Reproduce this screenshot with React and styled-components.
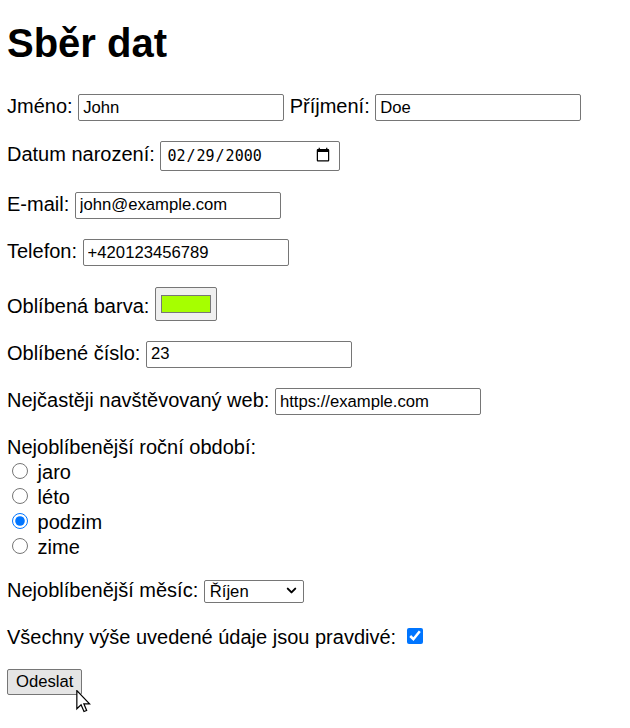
// Imports
import React from 'react';
import styled, { createGlobalStyle } from 'styled-components';
import { ChevronDown } from 'lucide-react';

// Données
const MOIS = ['Leden', 'Únor', 'Březen', 'Duben', 'Květen', 'Červen', 'Červenec', 'Srpen', 'Září', 'Říjen', 'Listopad', 'Prosinec'];
const OBDOBI = ['jaro', 'léto', 'podzim', 'zime'];

// Composant
const App = () => {

	// Return
	return(
		<Page>
			<GlobalStyle/>

			{/* Titre */}
			<Title>Sběr dat</Title>
			{/* Titre */}

			{/* Formulaire */}
			<Form onSubmit={ (e) => { e.preventDefault(); } }>

				<Row>
					Jméno: <TextInput type="text" defaultValue="John" /> Příjmení: <TextInput type="text" defaultValue="Doe" />
				</Row>

				<Row>
					Datum narození: <DateInput type="date" defaultValue="2000-02-29" />
				</Row>

				<Row>
					E-mail: <TextInput type="email" defaultValue="john@example.com" />
				</Row>

				<Row>
					Telefon: <TextInput type="tel" defaultValue="+420123456789" />
				</Row>

				<Row>
					Oblíbená barva: <ColorInput type="color" defaultValue="#a6ff00" />
				</Row>

				<Row>
					Oblíbené číslo: <TextInput type="number" defaultValue="23" />
				</Row>

				<Row>
					Nejčastěji navštěvovaný web: <TextInput type="url" defaultValue="https://example.com" />
				</Row>

				{/* Obdobi */}
				<Row>
					Nejoblíbenější roční období:<br/>
					{
						OBDOBI.map((o) => (
							<React.Fragment key={ o }>
								<Radio type="radio" name="obdobi" value={ o } defaultChecked={ o === 'podzim' } /> { o }<br/>
							</React.Fragment>
						))
					}
				</Row>
				{/* Obdobi */}

				{/* Mois */}
				<Row>
					Nejoblíbenější měsíc: <SelectZone>
						<Select defaultValue="Říjen">
							{ MOIS.map((m) => <option key={ m } value={ m }>{ m }</option>) }
						</Select>
						<SelectArrow size={ 15 } strokeWidth={ 3.2 } />
					</SelectZone>
				</Row>
				{/* Mois */}

				<Row>
					Všechny výše uvedené údaje jsou pravdivé: <Checkbox type="checkbox" defaultChecked />
				</Row>

				{/* Envoi */}
				<Row>
					<SubmitZone>
						<Button type="submit">Odeslat</Button>
						<Cursor width="15" height="23" viewBox="0 0 12 19">
							<path d="M0.5 0.5 L0.5 15.5 L4 12.2 L6.4 17.8 L8.6 16.9 L6.3 11.4 L11 11.4 Z" fill="white" stroke="black" strokeWidth="1" strokeLinejoin="miter" />
						</Cursor>
					</SubmitZone>
				</Row>
				{/* Envoi */}

			</Form>
			{/* Formulaire */}

		</Page>
	);

};

// Styled
const GlobalStyle = createGlobalStyle`
	body{
		margin: 0;
		background: white;
		color: black;
		font-family: "Liberation Sans", Arial, sans-serif;
		font-size: 20px;
	}
`;

const Page = styled.div`
	padding: 0 7px 20px 7px;
`;

const Title = styled.h1`
	margin: 21px 0 28px 0;
	font-size: 40px;
	font-weight: 700;
`;

const Form = styled.form`
	display: flex;
	flex-direction: column;
	gap: 20.4px;
`;

const Row = styled.p`
	margin: 0;
`;

const controlBase = `
	box-sizing: border-box;
	font-family: "Liberation Sans", Arial, sans-serif;
	font-size: 16.67px;
	color: black;
	background: white;
	border: 1px solid #767676;
	border-radius: 2px;
	outline: none;
`;

const TextInput = styled.input`
	${ controlBase }
	width: 206px;
	height: 27px;
	padding: 0 4px;
	&::-webkit-inner-spin-button,
	&::-webkit-outer-spin-button{
		-webkit-appearance: none;
		margin: 0;
	}
`;

const DateInput = styled.input`
	${ controlBase }
	width: 180px;
	height: 30px;
	padding: 0 4px 0 5px;
	font-family: "DejaVu Sans Mono", monospace;
	font-size: 15px;
	&::-webkit-calendar-picker-indicator{
		width: 16px;
		height: 18px;
		margin-right: 2px;
	}
`;

const ColorInput = styled.input`
	box-sizing: border-box;
	width: 62px;
	height: 34px;
	padding: 1px 2px;
	border: 1px solid #767676;
	border-radius: 2px;
	background: #efefef;
	&::-webkit-color-swatch-wrapper{
		padding: 6px 3px;
	}
	&::-webkit-color-swatch{
		border: 1px solid #777777;
	}
`;

const Radio = styled.input`
	width: 16px;
	height: 16px;
	margin: 4px 4px 0 5px;
`;

const SelectZone = styled.span`
	position: relative;
	display: inline-block;
`;

const Select = styled.select`
	${ controlBase }
	appearance: none;
	width: 100px;
	height: 23px;
	padding: 0 2px 0 5px;
`;

const SelectArrow = styled(ChevronDown)`
	position: absolute;
	right: 5px;
	top: 4px;
	color: black;
	pointer-events: none;
`;

const Checkbox = styled.input`
	width: 16px;
	height: 16px;
	margin: 4px 4px 2px 5px;
`;

const SubmitZone = styled.span`
	position: relative;
	display: inline-block;
`;

const Button = styled.button`
	box-sizing: border-box;
	height: 26px;
	padding: 0 8px;
	font-family: "Liberation Sans", Arial, sans-serif;
	font-size: 16.67px;
	color: black;
	background: #e5e5e5;
	border: 1px solid #767676;
	border-radius: 2px;
`;

const Cursor = styled.svg`
	position: absolute;
	left: 69px;
	top: 21px;
	pointer-events: none;
`;

// Export
export default App;
